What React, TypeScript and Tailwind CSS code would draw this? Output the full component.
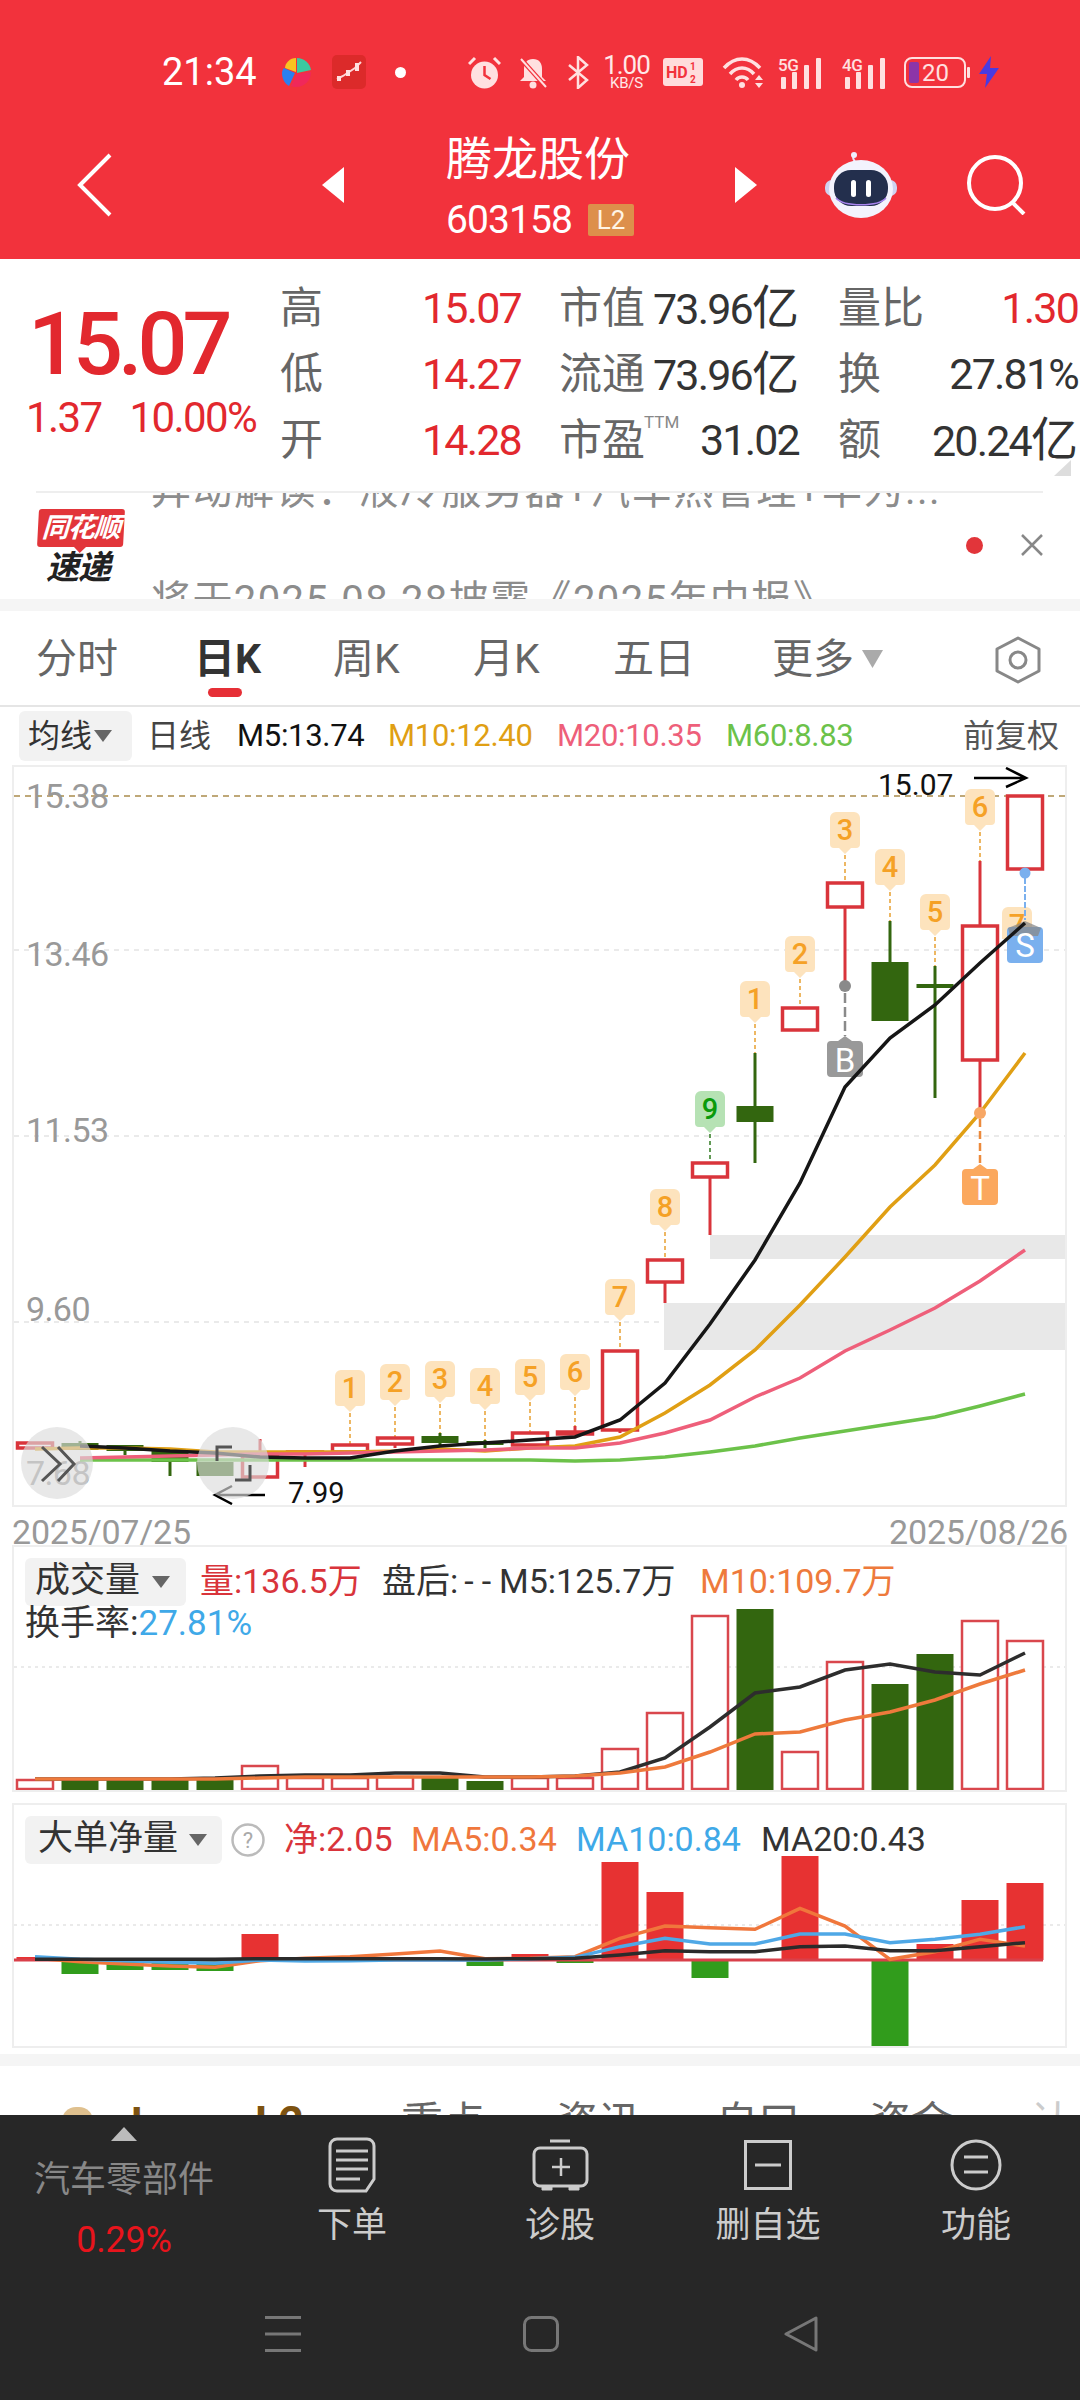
import React from "react";

const cx = (i: number) => 35 + 45 * i;
const RED = "#d9343b";
const GRN = "#33660f";
const pts = (ys: number[]) => ys.map((y, i) => `${cx(i)},${y}`).join(" ");
const seq = (ys: (number | null)[]) =>
  ys.map((y, i) => (y === null ? null : `${cx(i)},${y}`)).filter(Boolean).join(" ");

type C = { i: number; c: "r" | "g"; top?: number; a: number; b: number; bot?: number };
const candles: C[] = [
  { i: 0, c: "r", a: 1443, b: 1448 },
  { i: 1, c: "g", a: 1444, b: 1449, top: 1441 },
  { i: 2, c: "g", a: 1446, b: 1450, bot: 1455 },
  { i: 3, c: "g", a: 1450, b: 1461, bot: 1476 },
  { i: 4, c: "g", a: 1463, b: 1475 },
  { i: 5, c: "r", a: 1456, b: 1477, top: 1439 },
  { i: 6, c: "r", a: 1452, b: 1453, bot: 1467 },
  { i: 7, c: "r", a: 1445, b: 1452 },
  { i: 8, c: "r", a: 1438, b: 1444, bot: 1448 },
  { i: 9, c: "g", a: 1437, b: 1442, top: 1433, bot: 1446 },
  { i: 10, c: "g", a: 1442, b: 1444, top: 1440, bot: 1448 },
  { i: 11, c: "r", a: 1433, b: 1445 },
  { i: 12, c: "r", a: 1432, b: 1434, top: 1426 },
  { i: 13, c: "r", a: 1351, b: 1430, bot: 1433 },
  { i: 14, c: "r", a: 1260, b: 1282, bot: 1303 },
  { i: 15, c: "r", a: 1163, b: 1177, bot: 1235 },
  { i: 16, c: "g", a: 1107, b: 1121, top: 1053, bot: 1163 },
  { i: 17, c: "r", a: 1008, b: 1030 },
  { i: 18, c: "r", a: 883, b: 907, bot: 986 },
  { i: 19, c: "g", a: 963, b: 1020, top: 921 },
  { i: 20, c: "g", a: 985, b: 987, top: 966, bot: 1098 },
  { i: 21, c: "r", a: 926, b: 1060, top: 861, bot: 1113 },
  { i: 22, c: "r", a: 796, b: 869 },
];

const bubbles: [number, number, number, string][] = [
  [7, 1370, 1444, "1"], [8, 1364, 1437, "2"], [9, 1361, 1433, "3"], [10, 1368, 1440, "4"],
  [11, 1359, 1433, "5"], [12, 1354, 1426, "6"], [13, 1279, 1350, "7"], [14, 1189, 1258, "8"],
  [15, 1091, 1162, "9"], [16, 981, 1053, "1"], [17, 936, 1008, "2"], [18, 812, 882, "3"],
  [19, 849, 921, "4"], [20, 894, 966, "5"], [21, 789, 861, "6"],
];

const ma5 = [null, 1446, 1448, 1451, 1453, 1457, 1458, 1458, 1451, 1446, 1443, 1440, 1437, 1420, 1383, 1324, 1260, 1183, 1087, 1038, 1005, 963, 923];
const ma10 = [1449, 1448, 1448, 1449, 1452, 1452, 1452, 1452, 1451, 1449, 1451, 1448, 1446, 1437, 1413, 1385, 1350, 1305, 1257, 1207, 1165, 1113, 1053];
const ma20 = [null, 1458, 1457, 1456, 1455, 1454, 1454, 1453, 1452, 1451, 1450, 1448, 1448, 1443, 1433, 1420, 1397, 1378, 1351, 1330, 1308, 1281, 1250];
const ma60 = [null, 1460, 1460, 1460, 1460, 1460, 1460, 1460, 1460, 1460, 1460, 1460, 1461, 1460, 1457, 1452, 1446, 1438, 1431, 1424, 1417, 1406, 1394];

const vols: [number, "r" | "g"][] = [
  [1780, "r"], [1780, "g"], [1780, "g"], [1780, "g"], [1780, "g"], [1766, "r"], [1778, "r"], [1778, "r"],
  [1777, "r"], [1778, "g"], [1781, "g"], [1778, "r"], [1778, "r"], [1749, "r"], [1713, "r"], [1616, "r"],
  [1609, "g"], [1752, "r"], [1662, "r"], [1684, "g"], [1654, "g"], [1621, "r"], [1641, "r"],
];
const volM5 = [1779, 1779, 1779, 1779, 1778, 1776, 1775, 1775, 1773, 1773, 1777, 1777, 1776, 1772, 1758, 1727, 1693, 1687, 1670, 1664, 1672, 1675, 1653];
const volM10 = [1779, 1779, 1779, 1779, 1779, 1778, 1777, 1777, 1777, 1777, 1777, 1777, 1776, 1773, 1767, 1752, 1734, 1732, 1720, 1712, 1700, 1684, 1670];

const Z = 1960;
const net: [number, number, "r" | "g"][] = [
  [0, 1957, "r"], [1, 1974, "g"], [2, 1970, "g"], [3, 1970, "g"], [4, 1971, "g"], [5, 1934, "r"],
  [10, 1966, "g"], [11, 1954, "r"], [12, 1963, "g"], [13, 1862, "r"], [14, 1892, "r"], [15, 1978, "g"],
  [17, 1856, "r"], [19, 2047, "g"], [20, 1944, "r"], [21, 1900, "r"], [22, 1883, "r"],
];
const toY = (a: number[]) => a.map((v) => 1800 + v / 3);
const netM5 = toY([475, 485, 492, 498, 502, 482, 475, 470, 462, 453, 476, 475, 470, 415, 378, 383, 388, 325, 378, 478, 455, 418, 438]);
const netM10 = toY([470, 478, 482, 487, 490, 480, 483, 482, 480, 480, 480, 476, 472, 440, 415, 432, 432, 402, 402, 428, 418, 403, 380]);
const netM20 = toY([478, 478, 478, 478, 478, 476, 476, 476, 476, 476, 477, 476, 475, 465, 452, 455, 455, 440, 438, 452, 452, 440, 428]);

function MainChart() {
  return (
    <svg width={1051} height={738} viewBox="14 767 1051 738" className="block" fontFamily="Roboto, sans-serif">
      {[950, 1136, 1322].map((y) => (
        <line key={y} x1={14} x2={1065} y1={y} y2={y} stroke="#e4e4e4" strokeWidth={1.5} strokeDasharray="5 5" />
      ))}
      <line x1={14} x2={1065} y1={796} y2={796} stroke="#bfa878" strokeWidth={2} strokeDasharray="6 5" />
      <rect x={710} y={1235} width={355} height={24} fill="#e8e8e8" />
      <rect x={664} y={1303} width={401} height={47} fill="#e8e8e8" />
      {[["15.38", 808], ["13.46", 966], ["11.53", 1142], ["9.60", 1321], ["7.68", 1485]].map(([t, y]) => (
        <text key={t as string} x={26} y={y as number} fontSize={34} letterSpacing={-0.6} fill="#999">{t}</text>
      ))}
      {bubbles.map(([i, top, end, n], k) => {
        const x = cx(i);
        const g = n === "9";
        return (
          <g key={k}>
            <line x1={x} x2={x} y1={top + 43} y2={end} stroke={g ? "#2f7a1f" : "#e8a030"} strokeWidth={1.5} strokeDasharray="4 3" />
            <path d={`M${x - 15} ${top + 6}a6 6 0 0 1 6 -6h18a6 6 0 0 1 6 6v26a4 4 0 0 1 -4 4h-5l-6 6l-6 -6h-5a4 4 0 0 1 -4 -4z`} fill={g ? "#b6e2b4" : "#fde3bd"} />
            <text x={x} y={top + 28} textAnchor="middle" fontSize={29} fontWeight={500} fill={g ? "#0a9a0a" : "#f5a126"}>{n}</text>
          </g>
        );
      })}
      {candles.map((c) => {
        const x = cx(c.i);
        const col = c.c === "r" ? RED : GRN;
        return (
          <g key={c.i}>
            {c.top !== undefined && <line x1={x} x2={x} y1={c.top} y2={c.a} stroke={col} strokeWidth={3} />}
            {c.bot !== undefined && <line x1={x} x2={x} y1={c.b} y2={c.bot} stroke={col} strokeWidth={3} />}
            {c.c === "r" ? (
              <rect x={x - 17.5} y={c.a} width={35} height={c.b - c.a} fill="none" stroke={col} strokeWidth={3.5} />
            ) : (
              <rect x={x - 18.5} y={c.a - 1} width={37} height={c.b - c.a + 2} fill={col} />
            )}
          </g>
        );
      })}
      <polyline points={seq(ma60)} fill="none" stroke="#6cc24a" strokeWidth={3.5} />
      <polyline points={seq(ma10)} fill="none" stroke="#e09f14" strokeWidth={3.5} />
      <polyline points={seq(ma20)} fill="none" stroke="#ee5f7a" strokeWidth={3.5} />
      <circle cx={845} cy={986} r={6} fill="#8a8a8a" />
      <line x1={845} x2={845} y1={993} y2={1036} stroke="#8a8a8a" strokeWidth={2.5} strokeDasharray="10 4" />
      <path d="M827 1045a4 4 0 0 1 4 -4h7l7 -5l7 5h7a4 4 0 0 1 4 4v28a4 4 0 0 1 -4 4h-28a4 4 0 0 1 -4 -4z" fill="#999" />
      <text x={845} y={1072} textAnchor="middle" fontSize={33} fill="#fff">B</text>
      <circle cx={980} cy={1113} r={6} fill="#f7a765" />
      <line x1={980} x2={980} y1={1119} y2={1164} stroke="#ec8a3c" strokeWidth={2.5} strokeDasharray="8 4" />
      <path d="M962 1173a4 4 0 0 1 4 -4h7l7 -5l7 5h7a4 4 0 0 1 4 4v28a4 4 0 0 1 -4 4h-28a4 4 0 0 1 -4 -4z" fill="#fba85e" />
      <text x={980} y={1200} textAnchor="middle" fontSize={33} fill="#fff">T</text>
      <path d="M1002 913a6 6 0 0 1 6 -6h18a6 6 0 0 1 6 6v26h-30z" fill="#fde3bd" />
      <text x={1017} y={935} textAnchor="middle" fontSize={29} fontWeight={500} fill="#f5a126">7</text>
      <circle cx={1025} cy={873} r={5.5} fill="#7ab0ee" />
      <line x1={1025} x2={1025} y1={878} y2={920} stroke="#7ab0ee" strokeWidth={2} strokeDasharray="6 2" />
      <path d="M1007 931a4 4 0 0 1 4 -4h28a4 4 0 0 1 4 4v28a4 4 0 0 1 -4 4h-28a4 4 0 0 1 -4 -4z" fill="#7ab0ee" />
      <path d="M1008 928l17 -7l16 7l-3 8h-28z" fill="#8a8a8a" opacity={0.75} />
      <text x={1025} y={957} textAnchor="middle" fontSize={33} fill="#fff">S</text>
      <polyline points={seq(ma5)} fill="none" stroke="#161616" strokeWidth={3.5} />
      <text x={878} y={795} fontSize={30} fill="#111">15.07</text>
      <path d="M974 778H1025M1006 768L1026 778L1006 787" fill="none" stroke="#000" strokeWidth={2.5} />
      <text x={288} y={1503} fontSize={29} fill="#111">7.99</text>
      <path d="M265 1495H216M232 1486L215 1495L232 1504" fill="none" stroke="#000" strokeWidth={2.5} />
      <ellipse cx={57} cy={1463} rx={36} ry={36} fill="#dcdcdc" opacity={0.65} />
      <ellipse cx={233} cy={1463} rx={36} ry={36} fill="#dcdcdc" opacity={0.65} />
      <path d="M42 1447L60 1464L42 1481M58 1447L74 1464L58 1481" fill="none" stroke="#555" strokeWidth={3} />
      <path d="M217 1461V1447H232M250 1465V1480H235" fill="none" stroke="#555" strokeWidth={3} />
    </svg>
  );
}

function VolChart() {
  return (
    <svg width={1051} height={243} viewBox="14 1547 1051 243" className="block">
      <line x1={14} x2={1065} y1={1667} y2={1667} stroke="#e4e4e4" strokeWidth={1.5} strokeDasharray="3 4" />
      {vols.map(([t, c], i) =>
        c === "r" ? (
          <rect key={i} x={cx(i) - 18} y={t} width={36} height={1789 - t} fill="#fff" stroke="#d9474d" strokeWidth={2.5} />
        ) : (
          <rect key={i} x={cx(i) - 18.5} y={t} width={37} height={1790 - t} fill={GRN} />
        ),
      )}
      <polyline points={pts(volM5)} fill="none" stroke="#2d2d2d" strokeWidth={3.5} />
      <polyline points={pts(volM10)} fill="none" stroke="#ee7a3c" strokeWidth={3.5} />
    </svg>
  );
}

function NetChart() {
  return (
    <svg width={1051} height={241} viewBox="14 1805 1051 241" className="block">
      <line x1={14} x2={1065} y1={1925} y2={1925} stroke="#e4e4e4" strokeWidth={1.5} strokeDasharray="3 4" />
      {net.map(([i, v, c]) =>
        c === "r" ? (
          <rect key={i} x={cx(i) - 18.5} y={v} width={37} height={Z - v} fill="#e73232" />
        ) : (
          <rect key={i} x={cx(i) - 18.5} y={Z} width={37} height={v - Z} fill="#319c1c" />
        ),
      )}
      <line x1={14} x2={1043} y1={1960} y2={1960} stroke="#d9404a" strokeWidth={3} />
      <polyline points={pts(netM5)} fill="none" stroke="#f0773c" strokeWidth={3.5} />
      <polyline points={pts(netM10)} fill="none" stroke="#4fa8e6" strokeWidth={3.5} />
      <polyline points={pts(netM20)} fill="none" stroke="#2b2b2b" strokeWidth={3.5} />
    </svg>
  );
}

function Tri({ c = "#666" }: { c?: string }) {
  return (
    <svg width={18} height={12} viewBox="0 0 18 12" className="block shrink-0">
      <path d="M0 0H18L9 12Z" fill={c} />
    </svg>
  );
}

function Signal({ t }: { t: string }) {
  return (
    <svg width={46} height={34} viewBox="0 -2 46 34" className="block">
      <text x={0} y={14} fontSize={17} fontWeight={500} letterSpacing={-0.5} fill="#ffe0e0" fontFamily="Roboto">{t}</text>
      <rect x={3} y={20} width={5} height={12} rx={1} fill="#ffe0e0" />
      <rect x={14} y={15} width={5} height={17} rx={1} fill="#ffe0e0" />
      <rect x={26} y={8} width={5} height={24} rx={1} fill="#ffe0e0" />
      <rect x={38} y={1} width={5} height={31} rx={1} fill="#ffe0e0" />
    </svg>
  );
}

function StatusBar() {
  return (
    <div className="flex items-center h-[34px] mt-[55px] pl-[162px] text-white">
      <span className="w-[93px] text-[38px] leading-none whitespace-nowrap">21:34</span>
      <svg width={33} height={33} viewBox="0 0 33 33" className="block ml-[25px]">
        <path d="M16 2C10 2 5 7 5 12l11 4z" fill="#f9c320" />
        <path d="M17 2c7 0 13 5 14 12l-14 3z" fill="#3bc9a0" />
        <path d="M2 17c0-2 1-4 2-5l11 5-6 13C5 28 2 23 2 17z" fill="#2a7ff0" />
        <path d="M17 18l14-2c0 8-6 15-15 15-2 0-4-.5-5-1z" fill="#f0285a" />
      </svg>
      <svg width={34} height={34} viewBox="0 0 34 34" className="block ml-[19px]">
        <rect width={34} height={34} rx={5} fill="#dc2a2a" />
        <path d="M5 24l6-3 6-4 6-4 6-6" fill="none" stroke="#ffd6d6" strokeWidth={2} />
        <rect x={5} y={21} width={4} height={5} fill="#ffe0e0" />
        <rect x={14} y={15} width={4} height={6} fill="#ffe0e0" />
        <rect x={23} y={8} width={4} height={8} fill="#ffe0e0" />
      </svg>
      <span className="block w-[11px] h-[11px] rounded-full bg-white ml-[29px]" />
      <svg width={33} height={33} viewBox="0 0 33 33" className="block ml-[62px]">
        <circle cx={16.5} cy={19} r={13.5} fill="#ffe0e0" />
        <path d="M16.5 10v9l6 4" fill="none" stroke="#f2323c" strokeWidth={2.5} />
        <path d="M1 8L7 2M32 8L26 2" stroke="#ffe0e0" strokeWidth={3} />
      </svg>
      <svg width={30} height={33} viewBox="0 0 30 33" className="block ml-[17px]">
        <path d="M15 3c-6 0-9 4-9 10v8l-4 4h26l-4-4v-8c0-6-3-10-9-10z" fill="#ffe0e0" />
        <circle cx={15} cy={29} r={3.5} fill="#ffe0e0" />
        <path d="M3 3L28 31" stroke="#f2323c" strokeWidth={4.5} />
        <path d="M3 3L28 31" stroke="#ffe0e0" strokeWidth={2} />
      </svg>
      <svg width={22} height={33} viewBox="0 0 22 33" className="block ml-[19px]">
        <path d="M2 9L20 24L11 32V1L20 9L2 24" fill="none" stroke="#ffe0e0" strokeWidth={2.5} />
      </svg>
      <div className="ml-[14px] w-[47px] flex flex-col items-center text-[#ffe8e8] leading-none">
        <span className="text-[26px] leading-[22px] tracking-[-1px]">1.00</span>
        <span className="text-[15px] leading-[14px] tracking-[-0.2px]">KB/S</span>
      </div>
      <svg width={40} height={28} viewBox="0 0 40 28" className="block ml-[13px]">
        <rect width={40} height={28} rx={3} fill="#ffdcdc" />
        <text x={3} y={20} fontSize={16} fontWeight={700} fill="#f2323c" fontFamily="Roboto">HD</text>
        <text x={27} y={12} fontSize={10} fontWeight={700} fill="#f2323c" fontFamily="Roboto">1</text>
        <text x={27} y={25} fontSize={10} fontWeight={700} fill="#f2323c" fontFamily="Roboto">2</text>
      </svg>
      <svg width={44} height={33} viewBox="0 0 44 33" className="block ml-[19px]">
        <path d="M2 12C13 0 27 0 38 12M8 18C15 10 25 10 32 18M14 24C17 20 23 20 26 24" fill="none" stroke="#ffe0e0" strokeWidth={3.5} />
        <circle cx={20} cy={29} r={3} fill="#ffe0e0" />
        <path d="M33 24l4-5 4 5zM33 27l4 5 4-5z" fill="#ffe0e0" />
      </svg>
      <div className="ml-[12px]"><Signal t="5G" /></div>
      <div className="ml-[18px]"><Signal t="4G" /></div>
      <svg width={68} height={31} viewBox="0 0 68 31" className="block ml-[16px]">
        <rect x={1} y={1} width={60} height={29} rx={7} fill="none" stroke="#ffe0e0" strokeWidth={2} />
        <rect x={5} y={5} width={10} height={21} rx={2} fill="#8c35a8" />
        <text x={18} y={24} fontSize={24} fill="#ffe0e0" fontFamily="Roboto">20</text>
        <rect x={63} y={10} width={3} height={11} rx={1} fill="#ffe0e0" />
      </svg>
      <svg width={20} height={32} viewBox="0 0 20 32" className="block ml-[7px]">
        <path d="M12 0L0 18h8L6 32 20 12h-9z" fill="#4a3be0" />
      </svg>
    </div>
  );
}

function Robot() {
  return (
    <svg width={72} height={66} viewBox="0 0 72 66" className="block ml-[68px]">
      <path d="M30 9c-3-2-2-7 1-7" fill="none" stroke="#e6e4fb" strokeWidth={2} />
      <circle cx={29} cy={3} r={3} fill="#efeefe" />
      <rect x={0} y={28} width={72} height={16} rx={7} fill="#cfd2f0" />
      <ellipse cx={36} cy={37} rx={32} ry={29} fill="#f3f3fd" />
      <rect x={9} y={18} width={54} height={36} rx={17} fill="#232f4d" />
      <path d="M11 46c8 9 42 9 50 0" fill="none" stroke="#a884ee" strokeWidth={1.5} />
      <rect x={26} y={28} width={5} height={17} rx={2.5} fill="#fff" />
      <rect x={41} y={28} width={5} height={17} rx={2.5} fill="#fff" />
    </svg>
  );
}

function Header() {
  return (
    <div className="h-[259px] bg-[#f2323c] text-white overflow-hidden shrink-0">
      <StatusBar />
      <div className="flex items-center h-[149px] mt-[21px]">
        <svg width={35} height={64} viewBox="0 0 35 64" className="block ml-[77px]">
          <path d="M33 2L3 32L33 62" fill="none" stroke="#fff" strokeWidth={4} />
        </svg>
        <svg width={22} height={36} viewBox="0 0 22 36" className="block ml-[210px]">
          <path d="M22 0V36L0 18Z" fill="#fff" />
        </svg>
        <div className="ml-[102px] w-[189px] flex flex-col">
          <span className="text-[46px] leading-[50px] whitespace-nowrap">腾龙股份</span>
          <div className="flex items-center mt-[20px]">
            <span className="text-[39px] leading-[32px] tracking-[-0.9px]">603158</span>
            <span className="ml-[16px] w-[46px] h-[32px] bg-[#dd8f4b] rounded-[2px] text-[26px] leading-[32px] text-center text-[#fff4e5]">L2</span>
          </div>
        </div>
        <svg width={22} height={36} viewBox="0 0 22 36" className="block ml-[100px]">
          <path d="M0 0V36L22 18Z" fill="#fff" />
        </svg>
        <Robot />
        <svg width={62} height={60} viewBox="0 0 62 60" className="block ml-[69px]">
          <circle cx={29} cy={28} r={26} fill="none" stroke="#fff" strokeWidth={4} />
          <path d="M46 47L58 59" stroke="#fff" strokeWidth={4} />
        </svg>
      </div>
    </div>
  );
}

function Val({ v }: { v: string }) {
  const yi = v.endsWith("亿");
  return (
    <span className="tracking-[-1.8px]">
      {yi ? v.slice(0, -1) : v}
      {yi && <span className="text-[47px] tracking-normal">亿</span>}
    </span>
  );
}

const rows: { l: string; v: string; m: string; mv: string; ttm?: boolean; r: string; rv: string; rc: string }[] = [
  { l: "高", v: "15.07", m: "市值", mv: "73.96亿", r: "量比", rv: "1.30", rc: "text-[#e2282e]" },
  { l: "低", v: "14.27", m: "流通", mv: "73.96亿", r: "换", rv: "27.81%", rc: "text-[#333]" },
  { l: "开", v: "14.28", m: "市盈", mv: "31.02", ttm: true, r: "额", rv: "20.24亿", rc: "text-[#333]" },
];

function Stats() {
  return (
    <div className="relative h-[232px] bg-white shrink-0 flex">
      <div className="w-[280px] shrink-0 flex flex-col pt-[41px] text-[#e2282e]">
        <span className="ml-[28px] text-[88px] leading-[88px] font-medium tracking-[-5px]">15.07</span>
        <div className="flex mt-[6px] text-[42px] leading-[48px] tracking-[-1.6px] whitespace-nowrap">
          <span className="ml-[26px]">1.37</span>
          <span className="ml-[28px]">10.00%</span>
        </div>
      </div>
      <div className="flex flex-col pt-[16px]">
        {rows.map((r) => (
          <div key={r.l} className="flex items-center h-[66px] text-[43px] leading-[60px] whitespace-nowrap">
            <div className="w-[241px] flex justify-between items-center">
              <span className="text-[#666]">{r.l}</span>
              <span className="text-[#e2282e]"><Val v={r.v} /></span>
            </div>
            <div className="ml-[38px] w-[240px] flex justify-between items-center">
              <span className="text-[#666] relative">
                {r.m}
                {r.ttm && <span className="absolute left-[85px] top-[0px] text-[17px] leading-[24px] text-[#888]">TTM</span>}
              </span>
              <span className="text-[#333]"><Val v={r.mv} /></span>
            </div>
            <div className="ml-[39px] w-[240px] flex justify-between items-center">
              <span className="text-[#666]">{r.r}</span>
              <span className={r.rc}><Val v={r.rv} /></span>
            </div>
          </div>
        ))}
      </div>
      <svg width={17} height={16} viewBox="0 0 17 16" className="absolute left-[1054px] top-[201px]">
        <path d="M17 0V16H0Z" fill="#ddd" />
      </svg>
    </div>
  );
}

function Ticker() {
  return (
    <div className="h-[108px] bg-white shrink-0 flex relative overflow-hidden">
      <div className="absolute left-[36px] right-[37px] top-0 h-[2px] bg-[#eee]" />
      <div className="w-[151px] shrink-0 flex flex-col pl-[38px] pt-[18px]">
        <div className="relative w-[86px] h-[38px] bg-[#e2353a] rounded-[3px] -skew-x-3 text-white text-[27px] leading-[38px] font-bold italic text-center tracking-[-1px]">
          同花顺
          <div className="absolute left-[37px] top-[38px] w-0 h-0 border-x-[6px] border-x-transparent border-t-[6px] border-t-[#e2353a]" />
        </div>
        <span className="ml-[8px] mt-[3px] text-[33px] leading-[36px] font-bold italic text-[#222] tracking-[-1px]">速递</span>
      </div>
      <div className="w-[815px] shrink-0 -mt-[55px] text-[40px] text-[#8c8c8c] whitespace-nowrap">
        <div className="h-[110px] leading-[110px] tracking-[1.5px]">异动解读：液冷服务器+汽车热管理+华为...</div>
        <div className="h-[110px] leading-[110px] tracking-[1.4px]">将于2025.08.28披露《2025年中报》</div>
      </div>
      <div className="flex items-center h-[108px]">
        <span className="block w-[17px] h-[17px] rounded-full bg-[#e2353a]" />
        <svg width={22} height={22} viewBox="0 0 22 22" className="block ml-[38px]">
          <path d="M1 1L21 21M21 1L1 21" stroke="#888" strokeWidth={2.5} />
        </svg>
      </div>
    </div>
  );
}

function Tabs() {
  return (
    <div className="h-[96px] bg-white shrink-0 flex items-center pt-[3px] border-b-2 border-[#e5e5e5] text-[41px] text-[#666] whitespace-nowrap">
      <span className="ml-[36px] w-[82px]">分时</span>
      <span className="relative ml-[76px] w-[66px] font-bold text-[#333]">
        日K
        <span className="absolute left-[14px] top-[59px] w-[34px] h-[9px] rounded-[5px] bg-[#e62f36]" />
      </span>
      <span className="ml-[73px] w-[67px]">周K</span>
      <span className="ml-[73px] w-[67px]">月K</span>
      <span className="ml-[73px] w-[76px]">五日</span>
      <span className="ml-[83px] w-[82px]">更多</span>
      <svg width={21} height={18} viewBox="0 0 21 18" className="block ml-[8px] -mt-[2px]">
        <path d="M0 0H21L10.5 18Z" fill="#aaa" />
      </svg>
      <svg width={46} height={48} viewBox="0 0 46 48" className="block ml-[112px]">
        <path d="M23 2L44 13V35L23 46L2 35V13Z" fill="none" stroke="#888" strokeWidth={3} strokeLinejoin="round" />
        <circle cx={23} cy={24} r={8} fill="none" stroke="#888" strokeWidth={3} />
      </svg>
    </div>
  );
}

function MaRow() {
  return (
    <div className="h-[58px] bg-white shrink-0 flex items-center text-[31px] whitespace-nowrap tracking-[-0.3px]">
      <div className="ml-[19px] w-[113px] h-[50px] bg-[#f2f2f2] rounded-[6px] flex items-center pl-[9px] text-[#333] text-[32px] tracking-normal">
        <span className="w-[66px]">均线</span>
        <Tri />
      </div>
      <span className="ml-[15px] w-[90px] text-[#444] text-[32px] tracking-normal">日线</span>
      <span className="w-[151px] text-[#111]">M5:13.74</span>
      <span className="w-[169px] text-[#e09f14]">M10:12.40</span>
      <span className="w-[169px] text-[#ee5f7a]">M20:10.35</span>
      <span className="w-[237px] text-[#6cc24a]">M60:8.83</span>
      <span className="text-[#555] text-[32px] tracking-normal">前复权</span>
    </div>
  );
}

function Dates() {
  return (
    <div className="h-[38px] flex justify-between items-center pt-[12px] pl-[12px] pr-[12px] text-[34px] text-[#999] bg-white shrink-0 tracking-[-0.2px]">
      <span>2025/07/25</span>
      <span>2025/08/26</span>
    </div>
  );
}

function VolPanel() {
  return (
    <div className="relative ml-[12px] w-[1055px] h-[247px] border-2 border-[#eee] bg-white shrink-0">
      <VolChart />
      <div className="absolute left-[11px] top-[9px] flex flex-col">
        <div className="flex items-center whitespace-nowrap text-[34px]">
          <div className="w-[161px] h-[48px] bg-[#f2f2f2] rounded-[6px] flex items-center pl-[10px] text-[#333] text-[35px]">
            <span className="w-[117px]">成交量</span>
            <Tri />
          </div>
          <span className="ml-[14px] w-[182px] text-[#d9343b]">量:136.5万</span>
          <span className="w-[318px] text-[#333]">
            盘后:<span className="tracking-[8px] ml-[6px]">--</span>M5:125.7万
          </span>
          <span className="text-[#ee7a3c]">M10:109.7万</span>
        </div>
        <div className="text-[35px] leading-[36px] -mt-[1px] text-[#333] whitespace-nowrap">
          换手率:<span className="text-[#3fa9e8]">27.81%</span>
        </div>
      </div>
    </div>
  );
}

function NetPanel() {
  return (
    <div className="relative ml-[12px] mt-[11px] w-[1055px] h-[245px] border-2 border-[#eee] bg-white shrink-0">
      <NetChart />
      <div className="absolute left-[11px] top-[9px] flex items-center whitespace-nowrap text-[34px]">
        <div className="w-[197px] h-[48px] bg-[#f2f2f2] rounded-[6px] flex items-center pl-[13px] text-[#333] text-[35px]">
          <span className="w-[151px]">大单净量</span>
          <Tri />
        </div>
        <svg width={34} height={36} viewBox="0 0 34 36" className="block ml-[9px]">
          <circle cx={17} cy={18} r={15.5} fill="none" stroke="#bbb" strokeWidth={2.5} />
          <text x={17} y={26} textAnchor="middle" fontSize={22} fill="#aaa" fontFamily="Roboto">?</text>
        </svg>
        <span className="ml-[19px] w-[127px] text-[#d9343b]">净:2.05</span>
        <span className="w-[165px] text-[#f0773c]">MA5:0.34</span>
        <span className="w-[185px] text-[#3fa9e8]">MA10:0.84</span>
        <span className="text-[#333]">MA20:0.43</span>
      </div>
    </div>
  );
}

function ClippedTabs() {
  return (
    <div className="flex-1 bg-white overflow-hidden relative min-h-0">
      <div className="flex items-start pt-[33px] text-[42px] leading-[48px] text-[#666] whitespace-nowrap">
        <span className="ml-[62px] w-[31px] h-[40px] rounded-t-[14px] bg-[#dfc08e] mt-[8px]" />
        <span className="ml-[38px] w-[124px] font-bold text-[#7d5210]">L</span>
        <span className="w-[146px] font-bold text-[#7d5210] text-[44px]">L2</span>
        <span className="w-[155px]">重点</span>
        <span className="w-[160px]">资讯</span>
        <span className="w-[153px]">自口</span>
        <span className="w-[161px]">资金</span>
        <span className="text-[#ccc]">认</span>
      </div>
    </div>
  );
}

function BottomItem({ label, children }: { label: string; children: React.ReactNode }) {
  return (
    <div className="flex flex-col items-center w-[208px]">
      <div className="h-[58px] flex items-center justify-center">{children}</div>
      <span className="mt-[12px] text-[35px] leading-[40px] text-[#ccc] whitespace-nowrap">{label}</span>
    </div>
  );
}

function Bottom() {
  return (
    <div className="h-[285px] bg-[#272727] shrink-0 flex flex-col">
      <div className="flex h-[160px]">
        <div className="w-[248px] flex flex-col items-center pt-[12px]">
          <svg width={26} height={14} viewBox="0 0 26 14" className="block">
            <path d="M13 0L26 14H0Z" fill="#bbb" />
          </svg>
          <span className="mt-[15px] text-[36px] leading-[48px] text-[#888]">汽车零部件</span>
          <span className="mt-[16px] text-[36px] leading-[40px] text-[#e8141c] tracking-[-0.2px]">0.29%</span>
        </div>
        <div className="flex pt-[21px]">
          <BottomItem label="下单">
            <svg width={48} height={56} viewBox="0 0 48 56" className="block">
              <path d="M9 2H39a7 7 0 0 1 7 7V42L38 54H9a7 7 0 0 1-7-7V9a7 7 0 0 1 7-7Z" fill="none" stroke="#ccc" strokeWidth={3} />
              <path d="M8 14H40M8 23H40M8 32H40M8 42H32" stroke="#ccc" strokeWidth={3} />
            </svg>
          </BottomItem>
          <BottomItem label="诊股">
            <svg width={57} height={52} viewBox="0 0 57 52" className="block">
              <path d="M18 2H38" stroke="#ccc" strokeWidth={3} />
              <rect x={2} y={9} width={53} height={38} rx={6} fill="none" stroke="#ccc" strokeWidth={3} />
              <path d="M29 19V37M20 28H38" stroke="#ccc" strokeWidth={2.5} />
              <path d="M10 47V51H20V47M37 47V51H47V47" fill="#ccc" stroke="#ccc" strokeWidth={1} />
            </svg>
          </BottomItem>
          <BottomItem label="删自选">
            <svg width={48} height={50} viewBox="0 0 48 50" className="block">
              <rect x={1.5} y={1.5} width={45} height={47} fill="none" stroke="#ccc" strokeWidth={3} />
              <path d="M11 25H37" stroke="#ccc" strokeWidth={3} />
            </svg>
          </BottomItem>
          <BottomItem label="功能">
            <svg width={52} height={52} viewBox="0 0 52 52" className="block">
              <circle cx={26} cy={26} r={24} fill="none" stroke="#ccc" strokeWidth={3} />
              <path d="M14 18H38M14 33H38" stroke="#ccc" strokeWidth={3} />
            </svg>
          </BottomItem>
        </div>
      </div>
      <div className="flex items-center mt-[41px] h-[36px]">
        <svg width={36} height={36} viewBox="0 0 36 36" className="block ml-[265px]">
          <path d="M0 1.5H36M0 18H36M0 34.5H36" stroke="#777" strokeWidth={3} />
        </svg>
        <svg width={36} height={36} viewBox="0 0 36 36" className="block ml-[222px]">
          <rect x={1.5} y={1.5} width={33} height={33} rx={7} fill="none" stroke="#777" strokeWidth={3} />
        </svg>
        <svg width={36} height={36} viewBox="0 0 36 36" className="block ml-[224px]">
          <path d="M33 2V34L3 18Z" fill="none" stroke="#777" strokeWidth={3} strokeLinejoin="round" />
        </svg>
      </div>
    </div>
  );
}

export default function App() {
  return (
    <div className="w-[1080px] h-[2400px] overflow-hidden flex flex-col bg-white font-['Roboto','Noto_Sans_CJK_SC',sans-serif]">
      <Header />
      <Stats />
      <Ticker />
      <div className="h-[12px] bg-[#f5f5f5] shrink-0" />
      <Tabs />
      <MaRow />
      <div className="ml-[12px] w-[1055px] h-[742px] border-2 border-[#eee] bg-white shrink-0">
        <MainChart />
      </div>
      <Dates />
      <VolPanel />
      <NetPanel />
      <div className="h-[6px] bg-white shrink-0" />
      <div className="h-[12px] bg-[#f5f5f5] shrink-0" />
      <ClippedTabs />
      <Bottom />
    </div>
  );
}
